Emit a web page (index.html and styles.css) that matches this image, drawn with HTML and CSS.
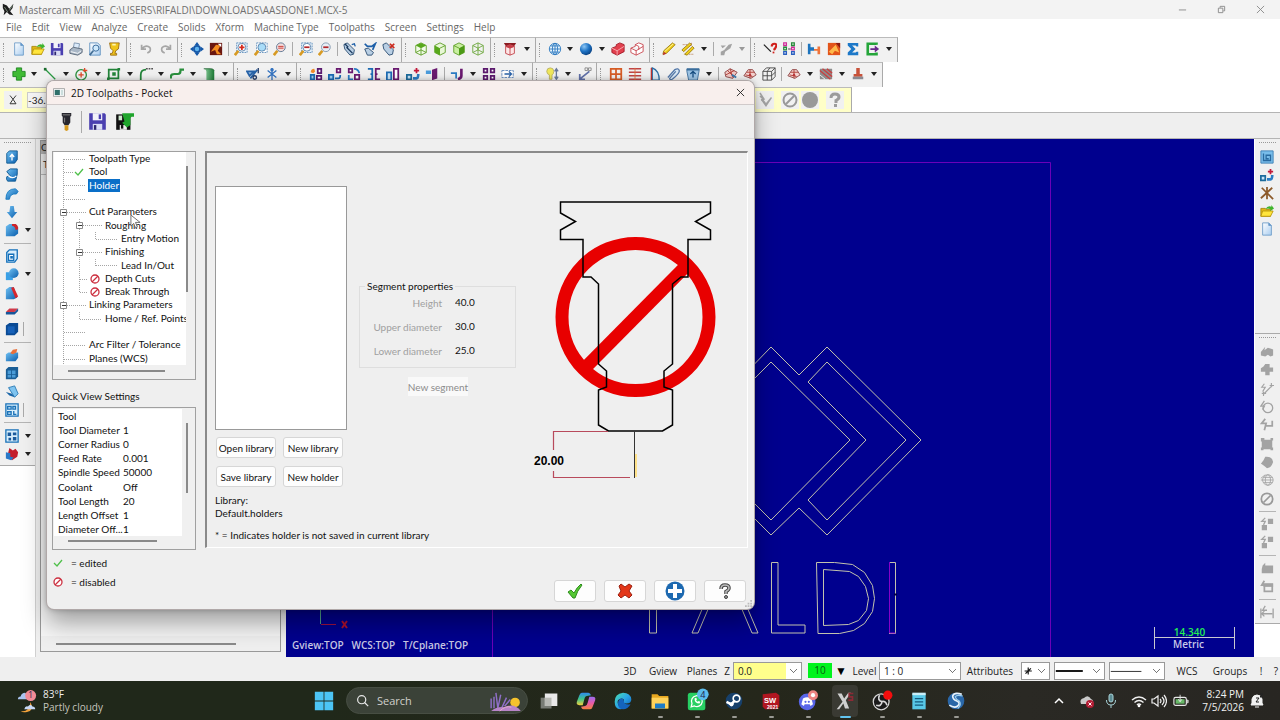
FILE: index.html
```html
<!DOCTYPE html>
<html lang="en">
<head>
<meta charset="utf-8">
<title>Mastercam Mill X5</title>
<link rel="stylesheet" href="styles.css">
</head>
<body>
<svg class="sprite" aria-hidden="true">
<defs>
<linearGradient id="gBlue" x1="0" y1="0" x2="1" y2="1"><stop offset="0" stop-color="#6fc0f2"/><stop offset="1" stop-color="#0b5fae"/></linearGradient>
<linearGradient id="gGreen" x1="0" y1="0" x2="1" y2="0"><stop offset="0" stop-color="#8fd0a0"/><stop offset="1" stop-color="#1c7a35"/></linearGradient>
<linearGradient id="gPage" x1="0" y1="0" x2="1" y2="1"><stop offset="0" stop-color="#fff"/><stop offset="1" stop-color="#a9cdf0"/></linearGradient>
<radialGradient id="gBall" cx=".35" cy=".3" r=".8"><stop offset="0" stop-color="#8cc6f5"/><stop offset=".5" stop-color="#1d72c4"/><stop offset="1" stop-color="#073a78"/></radialGradient>
<linearGradient id="gEdge" x1="0" y1="0" x2="1" y2="1"><stop offset="0" stop-color="#4be0b0"/><stop offset=".5" stop-color="#2aa5e6"/><stop offset="1" stop-color="#0a56b5"/></linearGradient>
<linearGradient id="gCopA" x1="0" y1="0" x2="0" y2="1"><stop offset="0" stop-color="#2f8bf0"/><stop offset=".5" stop-color="#3cc48c"/><stop offset="1" stop-color="#f2d13c"/></linearGradient>
<linearGradient id="gCopB" x1="0" y1="0" x2="0" y2="1"><stop offset="0" stop-color="#9a6cf0"/><stop offset=".5" stop-color="#e85aa8"/><stop offset="1" stop-color="#f4823c"/></linearGradient>
</defs>
<symbol id="page" viewBox="0 0 16 16"><path d="M3 1h7l3 3v11H3z" fill="url(#gPage)" stroke="#6d9cc8"/><path d="M10 1v3h3" fill="#5d95cf" stroke="#6d9cc8"/></symbol>
<symbol id="open" viewBox="0 0 16 16"><path d="M1 5h5l1 1h5v8H1z" fill="#e0b813" stroke="#a8860a"/><path d="M3 8h12l-3 6H1z" fill="#ffe53b" stroke="#b8960f"/><path d="M6 6q3-5 7-3V1l3 4-4 3V6q-3-2-6 0z" fill="#3fb52e"/></symbol>
<symbol id="save" viewBox="0 0 16 16"><path d="M1 1h13l1 1v13H1z" fill="#4a3fb0"/><path d="M4 1h8v6H4z" fill="#f2f2fa"/><path d="M9 2h2v4H9z" fill="#4a3fb0"/><path d="M4 10h8v5H4z" fill="#d9dcf5"/><path d="M5 11h2v4H5z" fill="#2d2670"/></symbol>
<symbol id="savew" viewBox="0 0 16 16"><path d="M1 2h12v13H1z" fill="#111"/><path d="M3 3h3v4H3z" fill="#cfe8cf"/><path d="M4 11h6v4H4z" fill="#eee"/><path d="M5 11h2v3H5z" fill="#111"/><path d="M6 1h10v3h-2l-1 1v6l-3 2-4-4 2-1z" fill="#1fa52c"/></symbol>
<symbol id="print" viewBox="0 0 16 16"><path d="M6 1l6 1-1 6-6-1z" fill="#dcebfa" stroke="#7790ac"/><path d="M1 9l4-3 10 2v4l-5 3-9-2z" fill="#a9b7c6" stroke="#586676"/><path d="M2 11l8 2 4-3" stroke="#fff" fill="none"/></symbol>
<symbol id="preview" viewBox="0 0 16 16"><path d="M2 1h9l3 3v11H2z" fill="url(#gPage)" stroke="#5e90bf"/><circle cx="9" cy="7" r="3.5" fill="#cfe9fb" stroke="#2b5f93"/><path d="M6 10l-4 5" stroke="#446f97" stroke-width="2"/></symbol>
<symbol id="cup" viewBox="0 0 16 16"><path d="M3 1h11l-1 7-3 2-1 3h2v2H4v-2h2l1-3-3-3z" fill="#f0c419" stroke="#9a6c10"/><path d="M6 3h4" stroke="#fff5b0" stroke-width="2"/></symbol>
<symbol id="undo" viewBox="0 0 16 16"><path d="M3 3v5h5M3.500 7.500q5-5 9-1 2 4-3 6" fill="none" stroke="#a6a6a6" stroke-width="2"/></symbol>
<symbol id="redo" viewBox="0 0 16 16"><path d="M13 3v5H8M12.500 7.500q-5-5-9-1-2 4 3 6" fill="none" stroke="#a6a6a6" stroke-width="2"/></symbol>
<symbol id="fit" viewBox="0 0 16 16"><path d="M8 0l3 4H5zM8 16l3-4H5zM0 8l4-3v6zM16 8l-4-3v6z" fill="#1558a8"/><circle cx="8" cy="8" r="3.500" fill="#5eb2ee" stroke="#1558a8" stroke-width="2"/></symbol>
<symbol id="repaint" viewBox="0 0 16 16"><path d="M1 1h14v14H1z" fill="#6b1710"/><path d="M2 11l6-8 5 1-3 6 4 4H9L7 9z" fill="#f58c1f"/><path d="M10 2h4v4z" fill="#fff"/></symbol>
<symbol id="zin" viewBox="0 0 16 16"><path d="M3 1h12v11H3z" fill="#e6f1fb" stroke="#5d8dbb" stroke-dasharray="2 1"/><circle cx="9" cy="6" r="4.500" fill="#fff" stroke="#567fa8"/><path d="M9 3v6M6 6h6" stroke="#d52b1e" stroke-width="2"/><path d="M5 10l-4 5" stroke="#d79a22" stroke-width="3"/></symbol>
<symbol id="ztar" viewBox="0 0 16 16"><path d="M3 1h12v11H3z" fill="#fff" stroke="#5d8dbb" stroke-dasharray="2 1"/><circle cx="9" cy="6" r="4.500" fill="#a8dcf8" stroke="#567fa8"/><path d="M5 10l-4 5" stroke="#d79a22" stroke-width="3"/></symbol>
<symbol id="zout" viewBox="0 0 16 16"><circle cx="9" cy="6" r="5" fill="#f3dcdc" stroke="#56718f"/><path d="M6 5h6M6 7h6" stroke="#c72a22"/><path d="M5 10l-4 5" stroke="#d79a22" stroke-width="3"/></symbol>
<symbol id="zbox" viewBox="0 0 16 16"><path d="M3 1h12v11H3z" fill="#e6f1fb" stroke="#5d8dbb" stroke-dasharray="2 1"/><circle cx="9" cy="6" r="4.500" fill="#fff" stroke="#567fa8"/><path d="M6 6h6" stroke="#b3252a" stroke-width="2"/><path d="M5 10l-4 5" stroke="#d79a22" stroke-width="3"/></symbol>
<symbol id="zmin" viewBox="0 0 16 16"><circle cx="9" cy="6" r="5" fill="#e8eef5" stroke="#7d95ad"/><path d="M6 6h6" stroke="#b3252a" stroke-width="2"/><path d="M5 10l-4 5" stroke="#d79a22" stroke-width="3"/></symbol>
<symbol id="dyn" viewBox="0 0 16 16"><path d="M1 3l4-2 8 8-1 5-4 1-6-7z" fill="#b9cfe4" stroke="#27496e"/><path d="M4 6l7 7M2 2l4 4" stroke="#1a3a5f" stroke-width="1.500"/><path d="M10 3l3-1 1 3" fill="none" stroke="#1d5fa8" stroke-width="1.500"/></symbol>
<symbol id="dyn2" viewBox="0 0 16 16"><path d="M2 8l4-1 6 5-2 3-5 0z" fill="#b9cfe4" stroke="#27496e"/><path d="M2 2l3 3h5l4-3-3 7" fill="none" stroke="#1d5fa8" stroke-width="2"/></symbol>
<symbol id="dynx" viewBox="0 0 16 16"><path d="M1 3l4-2 8 8-1 5-4 1-6-7z" fill="#b9cfe4" stroke="#27496e"/><path d="M9 2l5 5M14 2L9 7" stroke="#cc2a1e" stroke-width="2"/></symbol>
<symbol id="gcube1" viewBox="0 0 16 16"><path d="M2 4l6-3 6 3v8l-6 3-6-3z" fill="#f2fbe8" stroke="#5a9c22"/><path d="M2 4l6-3 6 3-6 3z" fill="#58a81c"/><path d="M8 7v8M2 12l6-3 6 3" stroke="#5a9c22" fill="none"/></symbol>
<symbol id="gcube2" viewBox="0 0 16 16"><path d="M2 4l6-3 6 3v8l-6 3-6-3z" fill="#e8f7d6" stroke="#5a9c22"/><path d="M2 4l6 3v8l-6-3z" fill="#58a81c"/><path d="M8 7l6-3" stroke="#5a9c22"/></symbol>
<symbol id="gcube3" viewBox="0 0 16 16"><path d="M2 4l6-3 6 3v8l-6 3-6-3z" fill="#c9efa0" stroke="#5a9c22"/><path d="M8 7l6-3v8l-6 3z" fill="#4c9a16"/><path d="M2 4l6 3" stroke="#5a9c22"/></symbol>
<symbol id="gcube4" viewBox="0 0 16 16"><path d="M2 4l6-3 6 3v8l-6 3-6-3zM2 4l6 3 6-3M8 7v8M8 1v8M2 12l6-3 6 3" fill="none" stroke="#6aa63a"/></symbol>
<symbol id="rcube" viewBox="0 0 16 16"><path d="M1 1h14l-3 5H4z" fill="#8b1c22"/><path d="M3 5l5-2 5 2v8l-5 2-5-2z" fill="#fde6e6" stroke="#c04048"/><path d="M3 5l5-2 5 2-5 2z" fill="#c93c48"/><path d="M3 5l5 2 5-2M8 7v8" stroke="#c04048" fill="none"/></symbol>
<symbol id="globe" viewBox="0 0 16 16"><g fill="none" stroke="#2b78bf"><circle cx="8" cy="8" r="6.500" fill="#e6f4fd"/><ellipse cx="8" cy="8" rx="3" ry="6.500"/><path d="M1.500 8h13M3 4.500h10M3 11.500h10M8 1.500v13"/></g></symbol>
<symbol id="ball" viewBox="0 0 16 16"><circle cx="8" cy="8" r="7" fill="url(#gBall)"/></symbol>
<symbol id="rsolid" viewBox="0 0 16 16"><path d="M1 7l5-2V3l4-2 5 2v8l-8 4-6-3z" fill="#e2404e" stroke="#a01825"/><path d="M1 7l6 3 8-5M7 10v5" fill="none" stroke="#f8b0b5"/></symbol>
<symbol id="rwire" viewBox="0 0 16 16"><path d="M1 7l5-2V3l4-2 5 2v8l-8 4-6-3zM1 7l6 3 8-5M7 10v5M6 3l4 2v4" fill="#fff" stroke="#c8434d"/></symbol>
<symbol id="pencil" viewBox="0 0 16 16"><path d="M1 14l1-4L12 1l3 2L5 13z" fill="#f0cf1c" stroke="#9c7c10"/><path d="M3 11l10-9" stroke="#fff7a8"/><path d="M1 15l1-4 3 2z" fill="#b33"/></symbol>
<symbol id="pencils" viewBox="0 0 16 16"><path d="M1 9l9-8 2 2-9 8zM4 14l9-9 2 2-8 8z" fill="#f0cf1c" stroke="#9c7c10"/><path d="M2 3h5M9 14h5M12 1v3" stroke="#a63" stroke-dasharray="1 1"/></symbol>
<symbol id="gpen" viewBox="0 0 16 16"><path d="M2 15v-4l4-2 5-6 4-1-2 5-6 4-1 4zM2 4h6l-4 3z" fill="#a3a3a3"/></symbol>
<symbol id="ask" viewBox="0 0 16 16"><path d="M1 3l8 8" stroke="#222" stroke-width="1.500"/><path d="M10 5q0-3 3-3t2 3-3 4" fill="none" stroke="#d0201c" stroke-width="2.500"/><path d="M11 11h2v2h-2z" fill="#d0201c"/></symbol>
<symbol id="nodes" viewBox="0 0 16 16"><g fill="#fff" stroke-width="1.500"><path d="M2 1h3v3H2zM11 6h3v3h-3z" stroke="#d02b9a"/><path d="M2 6h3v3H2zM11 1h3v3h-3z" stroke="#258a3a"/><path d="M2 11h3v3H2zM11 11h3v3h-3z" stroke="#2a5fc0"/></g><path d="M7 8h3" stroke="#333"/></symbol>
<symbol id="hblue" viewBox="0 0 16 16"><path d="M1 2h3v4h4v4H4v4H1z" fill="#1d74bd"/><path d="M15 5h-3v3H8v2h4v4h3z" fill="#f0743a"/></symbol>
<symbol id="orange" viewBox="0 0 16 16"><path d="M1 1h14v14H1z" fill="#e3541a"/><path d="M2 11l8-8 4 9-5-2-3 4z" fill="#ffb84a"/><path d="M10 1h5v6z" fill="#8c1a10"/></symbol>
<symbol id="sigma" viewBox="0 0 16 16"><path d="M2 1h12v4h-2l-1-1H7l4 4-4 4h4l1-1h2v4H2v-3l4-4-4-4z" fill="#1d78c8"/></symbol>
<symbol id="exit" viewBox="0 0 16 16"><path d="M12 3V2H2v12h10v-2" fill="none" stroke="#25a53a" stroke-width="3"/><path d="M5 7h5V4l5 4-5 4V9H5z" fill="#6a2a8c"/></symbol>
<symbol id="plus" viewBox="0 0 16 16"><path d="M5 1h6v4h4v6h-4v4H5v-4H1V5h4z" fill="#3fbb34" stroke="#1d8420"/></symbol>
<symbol id="line" viewBox="0 0 16 16"><path d="M2 2l12 12" stroke="#2a9a43" stroke-width="1.500"/><path d="M1 1h3v3H1z" fill="#1b6c2e"/></symbol>
<symbol id="circ" viewBox="0 0 16 16"><circle cx="7" cy="9" r="6" fill="none" stroke="#2a8f3d" stroke-width="1.500"/><path d="M7 6v6M4 9h6M11 1v5M9 4h5" stroke="#dd4a2a" stroke-width="1.500"/></symbol>
<symbol id="rect" viewBox="0 0 16 16"><path d="M2 3h11v10H2z" fill="none" stroke="#23843a" stroke-width="2"/><path d="M6 6h4v4H6zM12 1h3v3h-3zM0 12h3v3H0z" fill="#23843a"/></symbol>
<symbol id="fillet" viewBox="0 0 16 16"><path d="M2 15V9q0-6 6-6" fill="none" stroke="#23843a" stroke-width="2"/><path d="M8 2h8" stroke="#555" stroke-dasharray="2 1" stroke-width="1.500"/></symbol>
<symbol id="spline" viewBox="0 0 16 16"><path d="M1 13v-2q0-3 4-3h4q3 0 3-4V3h4" fill="none" stroke="#2a8f3d" stroke-width="2.500"/></symbol>
<symbol id="cyl" viewBox="0 0 16 16"><path d="M2 2h8q4 0 4 3v10H5V5q0-2-3-3z" fill="url(#gGreen)"/><path d="M2 2h8q3 0 4 2" stroke="#2a6a3a" fill="none"/></symbol>
<symbol id="trim" viewBox="0 0 16 16"><path d="M1 5h8l-5 5zM5 13l8-10" stroke="#2763a9" stroke-width="2" fill="#8fb8e0"/><circle cx="10" cy="12" r="2" fill="none" stroke="#223a66" stroke-width="1.500"/><path d="M14 1v6" stroke="#223a66" stroke-width="1.500"/></symbol>
<symbol id="star" viewBox="0 0 16 16"><path d="M8 1v14M3 4l10 8M13 4L3 12" stroke="#3272c0" stroke-width="1.500"/><circle cx="8" cy="3" r="2" fill="#3272c0"/></symbol>
<symbol id="xa" viewBox="0 0 16 16"><path d="M10 2h4v5h-4zM9 10h5v4H9z" fill="#fff" stroke="#5a1a70" stroke-width="2"/><path d="M2 9h4v5H2z" fill="#9fd0f2" stroke="#1d6cb4" stroke-width="2"/><path d="M2 6q0-4 4-4l1 3-2 2z" fill="#f08c28"/></symbol>
<symbol id="xb" viewBox="0 0 16 16"><path d="M10 2h4v4h-4z" fill="#fff" stroke="#6a1a70" stroke-width="2"/><path d="M1 9h5v5H1z" fill="#9fd0f2" stroke="#1d6cb4" stroke-width="2"/><path d="M8 13h4q2 0 2-4" fill="none" stroke="#1d6cb4" stroke-width="2"/></symbol>
<symbol id="xc" viewBox="0 0 16 16"><path d="M2 2h4v4H2zM9 9h5v5H9z" fill="#fff" stroke="#6a1a70" stroke-width="2"/><path d="M8 2q5 0 6 5M2 9v5h5" fill="none" stroke="#2a7cc4" stroke-width="2"/></symbol>
<symbol id="xd" viewBox="0 0 16 16"><path d="M1 2h5v12H1M4 8h3" fill="none" stroke="#1d6cb4" stroke-width="2"/><path d="M15 2h-5v12h5M12 8h-3" fill="none" stroke="#6a1a70" stroke-width="2"/></symbol>
<symbol id="xe" viewBox="0 0 16 16"><path d="M1 6h5v9H1z" fill="#c9e4f8" stroke="#1d6cb4" stroke-width="2"/><path d="M9 2h5v12H9z" fill="#fff" stroke="#6a1a70" stroke-width="2"/></symbol>
<symbol id="xf" viewBox="0 0 16 16"><path d="M1 9h5v5H1z" fill="#c9e4f8" stroke="#1d6c9c" stroke-width="2"/><path d="M8 13h4q2 0 2-5" fill="none" stroke="#2a7cc4" stroke-width="3"/><path d="M11 1h2v2h2v2h-2v2h-2V5H9V3h2z" fill="#c2183a"/></symbol>
<symbol id="xg" viewBox="0 0 16 16"><path d="M8 3l6-2v12l-6 2z" fill="#6a1a70"/><path d="M1 4h6v4H1z" fill="#4a9cdc"/></symbol>
<symbol id="xh" viewBox="0 0 16 16"><path d="M1 7h6v6" stroke="#2a7cc4" fill="none" stroke-width="2"/><path d="M13 2v8q0 3-4 4" fill="none" stroke="#6a1a70" stroke-width="3"/></symbol>
<symbol id="four" viewBox="0 0 16 16"><path d="M2 2h4v4H2zM10 2h4v4h-4zM2 10h4v4H2zM10 10h4v4h-4z" fill="#fff" stroke="#5c1a6e" stroke-width="2"/></symbol>
<symbol id="stretch" viewBox="0 0 16 16"><path d="M1 4h13v8H1z" fill="#fff" stroke="#5a83b8" stroke-dasharray="3 1"/><path d="M4 8h8M9 5l3 3-3 3" fill="none" stroke="#2a62a8" stroke-width="1.500"/></symbol>
<symbol id="bulb" viewBox="0 0 16 16"><path d="M2 5q0-4 4-4t4 4q0 3-2 4v5H5V9Q2 8 2 5z" fill="#f0e85a" stroke="#b9b060"/><path d="M13 3v10M11 5l2-3 2 3M11 11l2 3 2-3" stroke="#6a7a9a" fill="none" stroke-width="1.500"/></symbol>
<symbol id="move" viewBox="0 0 16 16"><path d="M8 1h3v3H8zM12 1h3v3h-3z" fill="none" stroke="#888"/><path d="M13 5L3 13M2 8v6h6" stroke="#6070a8" stroke-width="2" fill="none"/></symbol>
<symbol id="grid" viewBox="0 0 16 16"><path d="M2 2h12v12H2zM2 8h12M8 2v12" fill="none" stroke="#d65c26" stroke-width="2"/></symbol>
<symbol id="lines" viewBox="0 0 16 16"><path d="M1 2h14M1 6h14M1 10h14M1 14h14" stroke="#c04545" stroke-width="1.500"/><path d="M8 1v14" stroke="#e0703a"/></symbol>
<symbol id="arc" viewBox="0 0 16 16"><path d="M6 1v14h8Q14 4 6 1z" fill="#dceaf5" stroke="#2d6da4" stroke-width="1.500"/><path d="M5 1v14" stroke="#b33" stroke-width="1.500"/></symbol>
<symbol id="clip" viewBox="0 0 16 16"><path d="M1 12l8-9q4-2 5 1t-8 10q-3 1-3-1l7-8" fill="#d9e8f5" stroke="#5277a8" stroke-width="1.500"/></symbol>
<symbol id="box" viewBox="0 0 16 16"><path d="M1 2h14v2l-2 11H3L1 5z" fill="#9dc4e4" stroke="#3b6e9c"/><path d="M8 12V6M5 8l3-3 3 3" stroke="#174d80" stroke-width="1.500" fill="none"/><path d="M1 2h14v2H1z" fill="#3b6e9c"/></symbol>
<symbol id="mesh" viewBox="0 0 16 16"><path d="M1 6l6-4 8 4-5 7-8-2z" fill="#f0c8c4" stroke="#8c4040"/><path d="M4 4l7 7M2 9l10-5M7 2l3 10" stroke="#b03a34" fill="none"/><path d="M9 9l5 3" stroke="#3a7ab0" stroke-width="2"/></symbol>
<symbol id="mesh2" viewBox="0 0 16 16"><path d="M1 10l5-7h5l4 6-6 4z" fill="#f3d2ce" stroke="#8c4040"/><path d="M8 3v10M4 6h9M3 9l8 2" stroke="#b03a34" fill="none"/><path d="M8 7l2 3H6z" fill="#b3282c"/></symbol>
<symbol id="wcube" viewBox="0 0 16 16"><path d="M1 5l4-4h10v10l-4 4H1zM1 5h10v10M11 5l4-4M6 5v10M1 10h10l4-4M6 5l3-4" fill="none" stroke="#444"/></symbol>
<symbol id="stripe" viewBox="0 0 16 16"><path d="M1 2h14v12H1z" fill="#8d8d8d"/><path d="M1 4l12 10M4 2l11 9M9 2l6 5" stroke="#c84040" stroke-width="1.500"/><path d="M1 9l6 5" stroke="#fff"/></symbol>
<symbol id="stamp" viewBox="0 0 16 16"><path d="M6 1h4v7h3v3H3V8h3z" fill="#c8523a"/><path d="M2 11h12v3H2z" fill="#8a8a92"/></symbol>
<symbol id="chk" viewBox="0 0 16 16"><path d="M3 1l4 6-3 1M3 4l3 3" fill="none" stroke="#a5a5a5" stroke-width="1.500"/><path d="M4 8l2-1 3 4 5-6 1 1-6 9z" fill="#a5a5a5"/></symbol>
<symbol id="nog" viewBox="0 0 16 16"><circle cx="8" cy="8" r="6.500" fill="none" stroke="#999" stroke-width="2"/><path d="M4 12l8-8" stroke="#999" stroke-width="2"/></symbol>
<symbol id="dot" viewBox="0 0 16 16"><circle cx="8" cy="8" r="8" fill="#999"/></symbol>
<symbol id="help" viewBox="0 0 16 16"><path d="M4 6q0-4 4-4t4 3q0 2-3 3.500V11" fill="none" stroke="#9b9b9b" stroke-width="3"/><path d="M7 12h3v3H7z" fill="#9b9b9b"/></symbol>
<symbol id="bext" viewBox="0 0 16 16"><path d="M2 4l3-3h9v10l-3 4H2z" fill="url(#gBlue)" stroke="#0c568f"/><path d="M8 12V6M5.500 8L8 5l2.500 3" stroke="#fff" stroke-width="1.500" fill="none"/></symbol>
<symbol id="brev" viewBox="0 0 16 16"><path d="M2 4l4-3h8v6l-2 8H3q-2-2-1-5l4-1z" fill="url(#gBlue)" stroke="#0c568f"/><path d="M4 9q5 4 9 0" stroke="#fff" stroke-width="1.500" fill="none"/></symbol>
<symbol id="bswp" viewBox="0 0 16 16"><path d="M1 14q0-12 11-12l3 3-2 3q-7-1-8 6z" fill="url(#gBlue)" stroke="#1679c0"/></symbol>
<symbol id="bloft" viewBox="0 0 16 16"><path d="M6 1h4l1 7h3l-6 7-6-7h3z" fill="url(#gBlue)"/></symbol>
<symbol id="bfil" viewBox="0 0 16 16"><path d="M1 4l4-3h7l3 4v7l-4 3H1z" fill="url(#gBlue)"/><path d="M8 1h4q3 1 3 6l-3 1q0-4-4-5z" fill="#cf2228"/></symbol>
<symbol id="bshell" viewBox="0 0 16 16"><path d="M2 4l3-3h9v10l-3 4H2z" fill="#d6edfc" stroke="#1470ba" stroke-width="1.500"/><path d="M4 6h6v7H4z" fill="#fff" stroke="#1470ba" stroke-width="1.500"/><path d="M6 8h3v3H6z" fill="#1470ba"/></symbol>
<symbol id="bbool" viewBox="0 0 16 16"><path d="M1 6h8v9H1z" fill="#3aa0e6"/><circle cx="10" cy="7" r="5.500" fill="url(#gBlue)"/></symbol>
<symbol id="bdraft" viewBox="0 0 16 16"><path d="M1 4l4-3h5l4 12-4 2H1z" fill="url(#gBlue)"/><path d="M7 2l3-1 5 11-3 2z" fill="#d8262c"/></symbol>
<symbol id="bthick" viewBox="0 0 16 16"><path d="M1 9l4-4h10l-4 4z" fill="#d03a4a"/><path d="M1 9h10l4-4v3l-4 4H1z" fill="#17569a"/></symbol>
<symbol id="bcube" viewBox="0 0 16 16"><path d="M1 4l4-3h10v10l-4 4H1z" fill="#0a4a94"/><path d="M3 5h8v8H3z" fill="#1660b8"/></symbol>
<symbol id="bfeat" viewBox="0 0 16 16"><path d="M1 7l3-2h11v6l-3 4H1z" fill="url(#gBlue)"/><path d="M6 6l3-4 5-1-1 4-4 2z" fill="#e9703a"/></symbol>
<symbol id="b4" viewBox="0 0 16 16"><path d="M1 4l3-3h11v11l-3 3H1z" fill="#1a5e96"/><path d="M3 5h4v4H3zM8 5h4v4H8zM3 10h4v3H3zM8 10h4v3H8z" fill="#4a9cd8"/></symbol>
<symbol id="bsheet" viewBox="0 0 16 16"><path d="M4 3l7-2 4 9-4 4z" fill="#7fc4f0" stroke="#2577b4"/><path d="M1 8l7 2 3 4-6-2z" fill="#1a66a8"/></symbol>
<symbol id="blay" viewBox="0 0 16 16"><path d="M1 1h14v14H1z" fill="#d9effc" stroke="#1a72b8" stroke-width="1.500"/><path d="M3 4h4v3H3zM9 4h3v3H9zM3 10h4v3H3zM10 9v4h3" stroke="#1a72b8" fill="none" stroke-width="1.500"/></symbol>
<symbol id="bmap" viewBox="0 0 16 16"><path d="M1 1h14v14H1z" fill="#d9effc" stroke="#1a72b8" stroke-width="1.500"/><path d="M3 4h4v4H3zM9 4h4v3H9zM4 10h3v3H4zM9 9h4v4H9z" fill="#1a5a9c"/></symbol>
<symbol id="bred" viewBox="0 0 16 16"><path d="M5 1l4 3 3-2 3 4-1 5-6 4-5-6z" fill="#c41d2c"/><path d="M1 6l5 1v4l4 1-3 3-6-2z" fill="#2a79c8"/></symbol>
<symbol id="rscr" viewBox="0 0 16 16"><path d="M1 1h14v14H1z" fill="#78bdea" stroke="#3b7eb2"/><path d="M4 4v8h8V6H7v4h3" fill="none" stroke="#286aa0" stroke-width="1.500"/></symbol>
<symbol id="rax" viewBox="0 0 16 16"><path d="M8 1v14M1 14L14 2M2 2l13 13" stroke="#8c5a2a" stroke-width="2"/></symbol>
<symbol id="q1" viewBox="0 0 16 16"><path d="M1 8l5-6-1 4 4-3 6 2v7l-3 1-3-2-3 2-5-1z" fill="#a3a3a3"/></symbol>
<symbol id="q2" viewBox="0 0 16 16"><path d="M6 1h5v4h4v5h-4v4H6v-4H1V6l3-2z" fill="#a3a3a3"/></symbol>
<symbol id="q3" viewBox="0 0 16 16"><path d="M4 14L14 4M5 2L2 6h4l-3 5M13 1v5M11 4h5M2 13h5M4 11v5" fill="none" stroke="#a3a3a3" stroke-width="1.300"/></symbol>
<symbol id="q4" viewBox="0 0 16 16"><circle cx="9" cy="9" r="5.500" fill="none" stroke="#a3a3a3" stroke-width="1.500"/><path d="M5 1L1 7h4l-2 4" fill="none" stroke="#a3a3a3" stroke-width="1.500"/></symbol>
<symbol id="q5" viewBox="0 0 16 16"><path d="M6 1L2 6h5l-2 8M6 9h8V3" fill="none" stroke="#a3a3a3" stroke-width="2"/></symbol>
<symbol id="q6" viewBox="0 0 16 16"><path d="M2 3h12v11H2zM1 1h4v4H1zM12 1h3v3h-3zM1 12h3v3H1zM12 12h3v3h-3z" fill="#a3a3a3"/></symbol>
<symbol id="q7" viewBox="0 0 16 16"><path d="M6 2q8-1 9 6-2 7-7 7-5-4-7-5l3-4z" fill="#a3a3a3"/></symbol>
<symbol id="q8" viewBox="0 0 16 16"><g fill="none" stroke="#a3a3a3"><circle cx="9" cy="8" r="6"/><ellipse cx="9" cy="8" rx="3" ry="6"/><path d="M1 8h14M4 5h10M4 11h10M1 6l5-4"/></g></symbol>
<symbol id="q9" viewBox="0 0 16 16"><path d="M9 2h6v6H9zM2 9h6v6H2z" fill="#a3a3a3"/><path d="M6 1L2 5h4L4 9" fill="none" stroke="#a3a3a3" stroke-width="1.500"/></symbol>
<symbol id="q10" viewBox="0 0 16 16"><path d="M3 5l3-3v3h9v9H2V9z" fill="#a3a3a3"/></symbol>
<symbol id="q11" viewBox="0 0 16 16"><path d="M5 2L2 7h4M5 6h9v8H5z" fill="none" stroke="#a3a3a3" stroke-width="2"/><path d="M4 5h11v4H4z" fill="#a3a3a3"/></symbol>
<symbol id="q12" viewBox="0 0 16 16"><path d="M1 4v11M15 4v11M2 10h12M5 7l-3 3 3 3M6 1L3 6h5" fill="none" stroke="#a3a3a3" stroke-width="1.500"/></symbol>
<symbol id="no" viewBox="0 0 12 12"><circle cx="6" cy="6" r="4" fill="#fff" stroke="#cc2f3f" stroke-width="1.300"/><path d="M3 9l6-6" stroke="#cc2f3f" stroke-width="1.300"/></symbol>
<symbol id="tick" viewBox="0 0 12 12"><path d="M2 6l3 3 5-6" fill="none" stroke="#4fc04a" stroke-width="1.300"/></symbol>
</svg>

<div class="app">
  <header class="titlebar">
    <svg class="logo" viewBox="0 0 16 16"><path d="M1 1l5 2 3 4 5-6-1 5-3 4 4 5-5-1-3-3-4 4 1-5L1 6z" fill="#1d1d1d"/><path d="M3 5l4 6M9 9l4-6" stroke="#8ba08b"/></svg>
    <h1 class="title">Mastercam Mill X5&nbsp; C:\USERS\RIFALDI\DOWNLOADS\AASDONE1.MCX-5</h1>
    <div class="winbtns">
      <button aria-label="Minimize"><svg viewBox="0 0 10 10"><path d="M1 5.500h8" stroke="#888"/></svg></button>
      <button aria-label="Restore"><svg viewBox="0 0 10 10"><path d="M1.500 3.500h5v5h-5zM3.500 3V1.500h5v5H7" fill="none" stroke="#888"/></svg></button>
      <button aria-label="Close"><svg viewBox="0 0 10 10"><path d="M1 1l8 8M9 1L1 9" stroke="#888"/></svg></button>
    </div>
  </header>
  <nav class="menubar">
    <button>File</button><button>Edit</button><button>View</button><button>Analyze</button><button>Create</button><button>Solids</button><button>Xform</button><button>Machine Type</button><button>Toolpaths</button><button>Screen</button><button>Settings</button><button>Help</button>
  </nav>

  <div class="toolrow">
    <div class="grp w127">
      <button aria-label="New"><svg><use href="#page"/></svg></button><button aria-label="Open"><svg><use href="#open"/></svg></button><button aria-label="Save"><svg><use href="#save"/></svg></button><button aria-label="Print"><svg><use href="#print"/></svg></button><button aria-label="Preview"><svg><use href="#preview"/></svg></button><button aria-label="Verify"><svg><use href="#cup"/></svg></button>
    </div>
    <div class="grp w51">
      <button aria-label="Undo"><svg><use href="#undo"/></svg></button><button aria-label="Redo"><svg><use href="#redo"/></svg></button>
    </div>
    <div class="grp w224">
      <button aria-label="Fit"><svg><use href="#fit"/></svg></button><button aria-label="Repaint"><svg><use href="#repaint"/></svg></button><i class="sep"></i><button aria-label="Zoom window"><svg><use href="#zin"/></svg></button><button aria-label="Zoom target"><svg><use href="#ztar"/></svg></button><button aria-label="Un-zoom"><svg><use href="#zout"/></svg></button><i class="sep"></i><button aria-label="Zoom previous"><svg><use href="#zbox"/></svg></button><button aria-label="Zoom out"><svg><use href="#zmin"/></svg></button><i class="sep"></i><button aria-label="Dynamic rotate"><svg><use href="#dyn"/></svg></button><button aria-label="Rotate view"><svg><use href="#dyn2"/></svg></button><button aria-label="Clear view"><svg><use href="#dynx"/></svg></button>
    </div>
    <div class="grp w89">
      <button aria-label="Top view"><svg><use href="#gcube1"/></svg></button><button aria-label="Front view"><svg><use href="#gcube2"/></svg></button><button aria-label="Side view"><svg><use href="#gcube3"/></svg></button><button aria-label="Isometric"><svg><use href="#gcube4"/></svg></button>
    </div>
    <div class="grp w45">
      <button aria-label="Planes"><svg><use href="#rcube"/></svg></button><button class="dd" aria-label="More planes"></button>
    </div>
    <div class="grp w114">
      <button aria-label="Wireframe"><svg><use href="#globe"/></svg></button><button class="dd" aria-label="More wireframe"></button><button aria-label="Shaded"><svg><use href="#ball"/></svg></button><button class="dd" aria-label="More shading"></button><button aria-label="Solid"><svg><use href="#rsolid"/></svg></button><button aria-label="Translucent"><svg><use href="#rwire"/></svg></button>
    </div>
    <div class="grp w101">
      <button aria-label="Delete"><svg><use href="#pencil"/></svg></button><button aria-label="Delete duplicates"><svg><use href="#pencils"/></svg></button><button class="dd" aria-label="More delete"></button><i class="sep"></i><button aria-label="Undelete"><svg><use href="#gpen"/></svg></button><button class="dd grey" aria-label="More undelete"></button>
    </div>
    <div class="grp w147">
      <button aria-label="Analyze"><svg><use href="#ask"/></svg></button><button aria-label="Attributes"><svg><use href="#nodes"/></svg></button><i class="sep"></i><button aria-label="Hide"><svg><use href="#hblue"/></svg></button><button aria-label="Render"><svg><use href="#orange"/></svg></button><button aria-label="Sum"><svg><use href="#sigma"/></svg></button><button aria-label="Run"><svg><use href="#exit"/></svg></button><button class="dd" aria-label="More run"></button>
    </div>
  </div>

  <div class="toolrow">
    <div class="grp w234">
      <button aria-label="Point"><svg><use href="#plus"/></svg></button><button class="dd" aria-label="More points"></button><button aria-label="Line"><svg><use href="#line"/></svg></button><button class="dd" aria-label="More lines"></button><button aria-label="Arc"><svg><use href="#circ"/></svg></button><button class="dd" aria-label="More arcs"></button><button aria-label="Rectangle"><svg><use href="#rect"/></svg></button><button class="dd" aria-label="More shapes"></button><button aria-label="Fillet"><svg><use href="#fillet"/></svg></button><button class="dd" aria-label="More fillets"></button><button aria-label="Spline"><svg><use href="#spline"/></svg></button><button class="dd" aria-label="More splines"></button><button aria-label="Surface"><svg><use href="#cyl"/></svg></button><button class="dd" aria-label="More surfaces"></button>
    </div>
    <div class="grp w63">
      <button aria-label="Trim"><svg><use href="#trim"/></svg></button><button aria-label="Break"><svg><use href="#star"/></svg></button><button class="dd" aria-label="More break"></button>
    </div>
    <div class="grp w236">
      <button aria-label="Translate"><svg><use href="#xa"/></svg></button><button aria-label="Translate 3D"><svg><use href="#xb"/></svg></button><button aria-label="Mirror"><svg><use href="#xc"/></svg></button><button aria-label="Rotate"><svg><use href="#xd"/></svg></button><button aria-label="Scale"><svg><use href="#xe"/></svg></button><button aria-label="Dynamic"><svg><use href="#xf"/></svg></button><button aria-label="Project"><svg><use href="#xg"/></svg></button><i class="sep"></i><button aria-label="Offset"><svg><use href="#xh"/></svg></button><button class="dd" aria-label="More offset"></button><button aria-label="Array"><svg><use href="#four"/></svg></button><button aria-label="Stretch"><svg><use href="#stretch"/></svg></button><button class="dd" aria-label="More stretch"></button>
    </div>
    <div class="grp w64">
      <button aria-label="Dimension"><svg><use href="#bulb"/></svg></button><button class="dd" aria-label="More dimension"></button><button aria-label="Note"><svg><use href="#move"/></svg></button>
    </div>
    <div class="grp w286">
      <button aria-label="Net surface"><svg><use href="#grid"/></svg></button><button aria-label="Ruled surface"><svg><use href="#lines"/></svg></button><button aria-label="Revolved"><svg><use href="#arc"/></svg></button><button aria-label="Swept"><svg><use href="#clip"/></svg></button><button aria-label="Draft"><svg><use href="#box"/></svg></button><button class="dd" aria-label="More draft"></button><i class="sep"></i><button aria-label="Trim surface"><svg><use href="#mesh"/></svg></button><button aria-label="Extend surface"><svg><use href="#mesh2"/></svg></button><button aria-label="Blend"><svg><use href="#wcube"/></svg></button><i class="sep"></i><button aria-label="Machining"><svg><use href="#mesh2"/></svg></button><button class="dd" aria-label="More machining"></button><button aria-label="Hatch"><svg><use href="#stripe"/></svg></button><button class="dd" aria-label="More hatch"></button><button aria-label="Tool"><svg><use href="#stamp"/></svg></button><button class="dd" aria-label="More tool"></button>
    </div>
  </div>

  <div class="toolrow">
    <div class="coords">
      <button class="cell" aria-label="X coordinate"><svg viewBox="0 0 16 16"><path d="M4 2l4 5 4-5M8 7l-4 6h8z" fill="none" stroke="#333" stroke-width="1.300"/></svg></button>
      <input class="coord" aria-label="X value" value="-36.25">
      <div class="coordend">
        <button class="cell" aria-label="Select validate"><svg><use href="#chk"/></svg></button>
        <button class="cell off" aria-label="Cancel selection"><svg><use href="#nog"/></svg></button>
        <button class="cell" aria-label="End selection"><svg><use href="#dot"/></svg></button>
        <button class="cell off" aria-label="Selection help"><svg><use href="#help"/></svg></button>
      </div>
    </div>
  </div>
  <div class="ribbon"></div>

  <main class="work">
    <aside class="dock left">
      <div class="dockbox">
        <button aria-label="Extrude"><svg><use href="#bext"/></svg></button>
        <button aria-label="Revolve"><svg><use href="#brev"/></svg></button>
        <button aria-label="Sweep"><svg><use href="#bswp"/></svg></button>
        <button aria-label="Loft"><svg><use href="#bloft"/></svg></button>
        <button class="more" aria-label="Solid fillet"><svg><use href="#bfil"/></svg></button>
        <i class="hsep"></i>
        <button aria-label="Shell"><svg><use href="#bshell"/></svg></button>
        <button class="more" aria-label="Boolean"><svg><use href="#bbool"/></svg></button>
        <button aria-label="Draft faces"><svg><use href="#bdraft"/></svg></button>
        <button aria-label="Thicken"><svg><use href="#bthick"/></svg></button>
        <button class="bar" aria-label="Block"><svg><use href="#bcube"/></svg></button>
        <i class="hsep"></i>
        <button aria-label="Find features"><svg><use href="#bfeat"/></svg></button>
        <button aria-label="From surfaces"><svg><use href="#b4"/></svg></button>
        <button aria-label="Trim solid"><svg><use href="#bsheet"/></svg></button>
        <button class="bar" aria-label="Layout"><svg><use href="#blay"/></svg></button>
        <i class="hsep"></i>
        <button class="more" aria-label="Primitives"><svg><use href="#bmap"/></svg></button>
        <button class="more" aria-label="Remove"><svg><use href="#bred"/></svg></button>
      </div>
    </aside>
    <section class="manager">
      <div class="mantabs">Operations Manager</div>
      <div class="mansub">Toolpaths</div>
      <div class="manbody"></div>
      <div class="manfoot"><i class="thumb"></i></div>
    </section>
    <section class="view">
      <svg class="drawing" width="968" height="518" viewBox="286 139 968 518" fill="none">
        <path d="M492.500 658V162.500H1050.500V658" stroke="#6a00b8"/>
        <g stroke="#c3c3ad">
          <path d="M740 379L771 347l28 28 28-28 94 93-94 95-28-27-28 27-31-31"/>
          <path d="M740 393l31-31 79 78-79 80-31-31"/>
          <path d="M827 362l79 78-79 80-19-20 58-60-58-58z"/>
          <path d="M649.500 600v33h7v-33M706 600l-14 33h6l14-33M738 600l14 33h6l-14-33"/>
          <path d="M771.500 562.500h6.500v62.500h27v8h-33.500z"/>
          <path d="M816.500 562.500h18l18 2 12 8 8 13 2 13-2 13-8 12-11 7-14 3h-21.500z"/>
          <path d="M823.500 569.500l26 2 9 5 7 10 3 12-2 12-8 10-10 4-25 1z"/>
          <path d="M889 562.500h6.500v71H889"/>
        </g>
        <path d="M889.500 562v71h6" stroke="#8800c8" stroke-width="1"/>
        <path d="M894 594.500h3" stroke="#000046" stroke-width="2"/>
        <path d="M320.500 600v24" stroke="#4fa08a"/><path d="M321 624.500h15" stroke="#a01040"/>
        <path d="M342 621l5 7M347 621l-5 7" stroke="#b01030" stroke-width="2"/>
      </svg>
      <p class="gview">Gview:TOP&nbsp;&nbsp; WCS:TOP&nbsp;&nbsp; T/Cplane:TOP</p>
      <div class="scale"><span class="num">14.340</span><span class="unit">Metric</span></div>
    </section>
    <aside class="dock right">
      <div class="dockbox tall">
        <button aria-label="Screen"><svg><use href="#rscr"/></svg></button>
        <button aria-label="Dynamic transform"><svg><use href="#xf"/></svg></button>
        <button aria-label="Axes"><svg><use href="#rax"/></svg></button>
        <button aria-label="Open file"><svg><use href="#open"/></svg></button>
        <button aria-label="New file"><svg><use href="#page"/></svg></button>
      </div>
      <div class="dockbox masks">
        <button aria-label="Mask all"><svg><use href="#q1"/></svg></button>
        <button aria-label="Mask points"><svg><use href="#q2"/></svg></button>
        <button aria-label="Mask lines"><svg><use href="#q3"/></svg></button>
        <button aria-label="Mask arcs"><svg><use href="#q4"/></svg></button>
        <button aria-label="Mask splines"><svg><use href="#q5"/></svg></button>
        <button aria-label="Mask drafting"><svg><use href="#q6"/></svg></button>
        <button aria-label="Mask surfaces"><svg><use href="#q7"/></svg></button>
        <button aria-label="Mask solids"><svg><use href="#q8"/></svg></button>
        <button aria-label="Mask none"><svg><use href="#nog"/></svg></button>
        <i class="hsep"></i>
        <button aria-label="Mask group"><svg><use href="#q9"/></svg></button>
        <button aria-label="Mask result"><svg><use href="#q9"/></svg></button>
        <i class="hsep"></i>
        <button aria-label="Mask color"><svg><use href="#q10"/></svg></button>
        <button aria-label="Mask level"><svg><use href="#q11"/></svg></button>
        <i class="hsep"></i>
        <button aria-label="Mask last"><svg><use href="#q12"/></svg></button>
      </div>
    </aside>
  </main>

  <footer class="status">
    <button class="s3d">3D</button><button class="sgv">Gview</button><button class="spl">Planes</button>
    <label for="z" class="sz">Z</label>
    <select id="z" class="combo zsel"><option>0.0</option></select>
    <button class="color" aria-label="Color">10</button><button class="tri" aria-label="Pick color">▼</button>
    <label for="lvl" class="slv">Level</label>
    <select id="lvl" class="combo lvl"><option>1 : 0</option></select>
    <button class="sat">Attributes</button>
    <span class="pick p1"><select class="combo" aria-label="Point style"><option></option></select><svg viewBox="0 0 30 20"><path d="M4 10h8M8 6v8M5 13l6-6" stroke="#111" stroke-width="1.300"/></svg></span>
    <span class="pick p2"><select class="combo" aria-label="Line style"><option></option></select><svg viewBox="0 0 52 20"><path d="M2 10h30" stroke="#000" stroke-width="2"/></svg></span>
    <span class="pick p3"><select class="combo" aria-label="Line width"><option></option></select><svg viewBox="0 0 56 20"><path d="M2 10.500h34" stroke="#222"/></svg></span>
    <button class="swc">WCS</button><button class="sgr">Groups</button><button class="sex">!</button><button class="sqm">?</button>
  </footer>

  <footer class="taskbar">
    <button class="weather">
      <svg viewBox="0 0 22 26"><path d="M1 11q0-3 3-3 1-4 5-4l6 7z" fill="#a9c3ee"/><path d="M4 24q9 2 11-10 4 10-4 11-5 1-7-1z" fill="#f2a23c"/><path d="M8 22q1-4 4-3 3-3 5 0 3 0 3 3z" fill="#c7d8f5"/><circle cx="15" cy="7" r="6" fill="#f28b96"/><text x="15" y="10" class="badge">1</text></svg>
      <span class="temp">83°F</span><span class="sky">Partly cloudy</span>
    </button>
    <div class="apps">
      <button class="app-btn" aria-label="Start"><svg viewBox="0 0 24 24"><path d="M1 1h10.500v10.500H1zM12.500 1H23v10.500H12.500zM1 12.500h10.500V23H1zM12.500 12.500H23V23H12.500z" fill="#4cc4f5"/></svg></button>
      <label class="search"><svg viewBox="0 0 16 16"><circle cx="7" cy="7" r="5" fill="none" stroke="#e8e8e8" stroke-width="1.500"/><path d="M10.500 10.500L15 15" stroke="#e8e8e8" stroke-width="1.500"/></svg><input type="text" placeholder="Search" aria-label="Search"><svg class="lav" viewBox="0 0 34 24"><path d="M2 20V10M5 20V8M9 20L7 4M9 20l3-14M13 20l5-11M16 18l6-7" stroke="#8f6fc8" stroke-width="1.500"/><circle cx="27" cy="14" r="5" fill="#f5c22c"/><path d="M2 23q6-5 14-4 10-5 17 4z" fill="#b884c8"/><path d="M11 23q6-6 12-4" stroke="#e8b0d0" fill="none"/></svg></label>
      <button class="app-btn" aria-label="Task view"><svg viewBox="0 0 24 24"><path d="M2 8h13v13H2z" fill="#777b74"/><path d="M7 3h15v15H7z" fill="#e9e9e9"/><path d="M7 8h8v10H7z" fill="#b8bab5"/></svg></button>
      <button class="app-btn" aria-label="Copilot"><svg viewBox="0 0 24 24"><path d="M7 2h8q2 0 3 3l-5 1q-2 0-3 4l-2 7H4q-4 0-3-4l3-8q1-3 3-3z" fill="url(#gCopA)"/><path d="M17 22H9q-2 0-3-3l5-1q2 0 3-4l2-7h4q4 0 3 4l-3 8q-1 3-3 3z" fill="url(#gCopB)"/></svg></button>
      <button class="app-btn" aria-label="Edge"><svg viewBox="0 0 24 24"><path d="M2 13Q2 3 12 2q9 0 10 8 0 5-6 5-4 0-3-3 1-3-3-3-6 1-4 7 2 5 8 5-12 4-12-8z" fill="url(#gEdge)"/><path d="M6 15q0-5 4-6 3 0 3 3 0 5 8 4-3 6-9 6-6-1-6-7z" fill="#1464be"/></svg></button>
      <button class="app-btn run" aria-label="File Explorer"><svg viewBox="0 0 24 24"><path d="M2 4h7l2 2h11v15H2z" fill="#e8a820"/><path d="M2 8h20v13H2z" fill="#ffd35c"/><path d="M6 15h12v6H6z" fill="#1d7cc8"/></svg></button>
      <button class="app-btn run" aria-label="WhatsApp"><svg viewBox="0 0 24 24"><rect x="1" y="2" width="21" height="21" rx="3" fill="#27d063"/><path d="M5 19l1-4a6.500 6.500 0 1 1 3 3z" fill="none" stroke="#fff" stroke-width="1.500"/><path d="M9 9q0 6 6 6l1-2-2-1-1 1q-2-1-2-2l1-1-1-2z" fill="#fff"/><circle cx="19" cy="4" r="7" fill="#5bbcec"/><text x="19" y="8" class="badge four">4</text></svg></button>
      <button class="app-btn run" aria-label="Steam"><svg viewBox="0 0 24 24"><circle cx="12" cy="12" r="10" fill="#17406b"/><circle cx="15" cy="9" r="4" fill="none" stroke="#fff" stroke-width="2"/><path d="M3 13l6 3 4-5" fill="none" stroke="#fff" stroke-width="3"/><circle cx="9" cy="16" r="2.500" fill="#fff"/></svg></button>
      <button class="app-btn run" aria-label="SolidWorks"><svg viewBox="0 0 24 24"><path d="M2 4l16-2 4 3v14l-4 3H5l-3-3z" fill="#b01620"/><text x="11" y="14" class="sw">SW</text><text x="14" y="21" class="sw yr">2021</text></svg></button>
      <button class="app-btn run" aria-label="Discord"><svg viewBox="0 0 24 24"><circle cx="11" cy="13" r="10" fill="#5865e8"/><path d="M6 9q5-3 10 0l2 7-3 2-1-2H8l-1 2-3-2z" fill="#fff"/><circle cx="9" cy="13" r="1.300" fill="#5865e8"/><circle cx="13" cy="13" r="1.300" fill="#5865e8"/><circle cx="18" cy="5" r="6" fill="#ee8482"/><circle cx="18" cy="5" r="2.500" fill="#fff"/></svg></button>
      <button class="app-btn run active" aria-label="Mastercam"><svg viewBox="0 0 24 24"><path d="M3 3h5l3 6 5-7h3l-6 9 4 10h-5l-2-6-5 7H2l7-9z" fill="#d0d0d0"/><path d="M22 3h-5v4h4v4h-5" fill="none" stroke="#8c2a35" stroke-width="2"/></svg></button>
      <button class="app-btn run" aria-label="OBS"><svg viewBox="0 0 24 24"><circle cx="11" cy="13" r="9.500" fill="#1a1a1a" stroke="#d8d8d8" stroke-width="1.500"/><path d="M9 5q-3 6 3 8M18 17q-2-6-7-4M5 17q6 2 7-4" fill="none" stroke="#d8d8d8" stroke-width="2"/><circle cx="19" cy="5" r="5.500" fill="#f40d0d"/></svg></button>
      <button class="app-btn run" aria-label="Notepad"><svg viewBox="0 0 24 24"><path d="M4 3h16v19H4z" fill="#58c8e8"/><path d="M4 2h16v3H4z" fill="#c9eef8"/><path d="M7 9h10M7 13h10M7 17h10" stroke="#14587c" stroke-width="1.500"/></svg></button>
      <button class="app-btn run" aria-label="Browser"><svg viewBox="0 0 24 24"><circle cx="12" cy="12" r="10" fill="#2a67a8"/><path d="M19 4q-9-3-11 2 0 4 5 6t1 6q-4 3-10-1" fill="none" stroke="#e8f2fa" stroke-width="2"/><path d="M20 6q-7-2-9 1 1 3 5 5 3 4-2 9" fill="none" stroke="#9fd0f0" stroke-width="1.500"/></svg></button>
    </div>
    <div class="tray">
      <button class="t1" aria-label="Show hidden icons"><svg viewBox="0 0 16 16"><path d="M4 10l4-4 4 4" fill="none" stroke="#fff" stroke-width="1.500"/></svg></button>
      <button class="t2" aria-label="OneDrive"><svg viewBox="0 0 16 16"><path d="M2 11q-2-5 3-6 4-4 7 1 3 1 2 5z" fill="#c9c9c9"/><circle cx="11" cy="11" r="4" fill="#b41c34"/><path d="M9.500 9.500l3 3M12.500 9.500l-3 3" stroke="#fff"/></svg></button>
      <button class="t3" aria-label="Microphone"><svg viewBox="0 0 16 16"><rect x="6" y="1" width="4" height="8" rx="2" fill="#5c8c94" stroke="#a9d3d8"/><path d="M3.500 7q0 5 4.500 5t4.500-5M8 12v3" fill="none" stroke="#a9d3d8"/></svg></button>
      <button class="t4" aria-label="Network"><svg viewBox="0 0 16 16"><path d="M1 7q7-6 14 0M3.500 9.500q4.500-4 9 0M6 12q2-2 4 0" fill="none" stroke="#f0f0f0" stroke-width="1.400"/><circle cx="8" cy="13" r="1.300" fill="#fff"/></svg></button>
      <button class="t5" aria-label="Volume"><svg viewBox="0 0 16 16"><path d="M1 6h2l4-3v10l-4-3H1zM9 6q2 2 0 4M11 4q4 4 0 8M13 2q5 6 0 12" fill="none" stroke="#f0f0f0" stroke-width="1.200"/></svg></button>
      <button class="t6" aria-label="Battery"><svg viewBox="0 0 18 16"><rect x="1" y="4" width="14" height="9" rx="2" fill="none" stroke="#e8e8e8" stroke-width="1.300"/><path d="M3 6h10v5H3z" fill="#68b868"/><path d="M16 7h1v3h-1zM8 1v7M6 6l2 3 2-3" stroke="#e8e8e8" fill="none"/></svg></button>
      <button class="clock"><span>8:24 PM</span><span>7/5/2026</span></button>
      <button class="bell" aria-label="Notifications"><svg viewBox="0 0 16 16"><path d="M2 12l1-2V6q1-4 5-4t5 4v4l1 2zM6 14h4" fill="#f2f2f2" stroke="#f2f2f2"/><path d="M7 5h3l-3 4h3M11 1h3l-3 3h3" fill="none" stroke="#222"/></svg></button>
    </div>
  </footer>

  <section class="dialog" role="dialog" aria-labelledby="dt">
    <header class="dtitle">
      <svg viewBox="0 0 14 10"><path d="M.500.500h13v9H.500z" fill="#fff" stroke="#999"/><path d="M2 2h6v6H2z" fill="#2f6f6a"/><path d="M9 2h3v6H9z" fill="#cdd"/></svg>
      <h2 id="dt">2D Toolpaths - Pocket</h2>
      <button aria-label="Close dialog"><svg viewBox="0 0 10 10"><path d="M1 1l8 8M9 1L1 9" stroke="#222"/></svg></button>
    </header>
    <div class="dtools">
      <button aria-label="Tool"><svg viewBox="0 0 20 20"><path d="M5 1h10v3l-1 1v6l-2 3H8l-2-3V5L5 4z" fill="#26262e"/><path d="M6 3h8M8 6v5" stroke="#888"/><path d="M8 14h4v5l-2 1-2-1z" fill="#d69a1e"/></svg></button>
      <i class="sep"></i>
      <button aria-label="Save parameters"><svg viewBox="0 0 16 16"><use href="#save"/></svg></button>
      <button aria-label="Save to defaults"><svg viewBox="0 0 16 16"><use href="#savew"/></svg></button>
    </div>
    <div class="dbody">
      <div class="dleft">
        <div class="treebox">
          <div class="treeview">
            <svg class="treelines" viewBox="0 0 130 214" width="130" height="214" fill="none">
              <g stroke="#a5a5a5" stroke-dasharray="1 1">
                <path d="M10.500 7v207M11 7.500h22M11 20.500h9M11 33.500h22M11 47.500h22M14 60.500h19M14 153.500h19M11 180.500h22M11 193.500h22M11 207.500h22"/>
                <path d="M26.500 67v73M30 73.500h19M30 100.500h19M27 127.500h8M27 140.500h8M26.500 160v7M27 167.500h22M42.500 80v7M43 87.500h22M42.500 107v7M43 113.500h22"/>
              </g>
              <g stroke="#8a8a8a" fill="#fff"><path d="M7.500 57.500h6v6h-6zM23.500 70.500h6v6h-6zM23.500 97.500h6v6h-6zM7.500 150.500h6v6h-6z"/></g>
              <path d="M9 60.500h4M25 73.500h4M25 100.500h4M9 153.500h4" stroke="#333"/>
              <use href="#tick" x="20" y="14" width="12" height="12"/>
              <use href="#no" x="36" y="121" width="12" height="12"/>
              <use href="#no" x="36" y="134" width="12" height="12"/>
            </svg>
            <ul class="tree">
              <li>Toolpath Type</li><li>Tool</li><li><span class="sel">Holder</span></li><li></li>
              <li>Cut Parameters</li><li class="l1">Roughing</li><li class="l2">Entry Motion</li><li class="l1">Finishing</li><li class="l2">Lead In/Out</li><li class="l1">Depth Cuts</li><li class="l1">Break Through</li>
              <li>Linking Parameters</li><li class="l1">Home / Ref. Points</li><li></li><li>Arc Filter / Tolerance</li><li>Planes (WCS)</li>
            </ul>
          </div>
          <i class="vthumb"></i><i class="hthumb"></i>
        </div>
        <h3 class="qh">Quick View Settings</h3>
        <div class="treebox quick">
          <table>
            <tr><th>Tool</th><td></td></tr>
            <tr><th>Tool Diameter</th><td>1</td></tr>
            <tr><th>Corner Radius</th><td>0</td></tr>
            <tr><th>Feed Rate</th><td>0.001</td></tr>
            <tr><th>Spindle Speed</th><td>50000</td></tr>
            <tr><th>Coolant</th><td>Off</td></tr>
            <tr><th>Tool Length</th><td>20</td></tr>
            <tr><th>Length Offset</th><td>1</td></tr>
            <tr><th>Diameter Off...</th><td>1</td></tr>
          </table>
          <i class="vthumb"></i><i class="hthumb"></i>
        </div>
        <p class="legend"><svg><use href="#tick"/></svg>= edited</p>
        <p class="legend"><svg><use href="#no"/></svg>= disabled</p>
      </div>
      <div class="dright">
        <div class="pane">
          <div class="lib">
            <div class="listbox"></div>
            <div class="libbtns"><button>Open library</button><button>New library</button><button>Save library</button><button>New holder</button></div>
            <p class="libtext">Library:<br>Default.holders</p>
            <p class="note">* = Indicates holder is not saved in current library</p>
          </div>
          <div class="seg">
            <fieldset>
              <legend>Segment properties</legend>
              <label for="h">Height</label><input id="h" value="40.0">
              <label for="ud">Upper diameter</label><input id="ud" value="30.0">
              <label for="ld">Lower diameter</label><input id="ld" value="25.0">
            </fieldset>
            <button class="newseg" disabled>New segment</button>
          </div>
          <svg class="holder" viewBox="530 195 190 290" fill="none">
            <circle cx="635.500" cy="317" r="73.500" stroke="#e80000" stroke-width="13"/>
            <path d="M586 367L684 268" stroke="#e80000" stroke-width="13"/>
            <path d="M560.500 202H710.500V213L695.500 221.500 710.500 230V239.500H688V277H681L672.500 284V364L664 371V387L672.500 390V425L662.500 431H608.500L598.500 425V390L606.500 387V371L598.500 364V284L591 277H583V239.500H560.500V230L575.500 221.500 560.500 213Z" stroke="#000" stroke-width="1.500"/>
            <path d="M608 431.500H553.500V450M553.500 471v6.500H630" stroke="#b84a5c" stroke-width="1.200"/>
            <path d="M635.500 454v23" stroke="#ffe28a" stroke-width="3"/><path d="M634.500 431v47" stroke="#333"/>
            <text x="534" y="465" class="dim">20.00</text>
          </svg>
        </div>
        <div class="actions">
          <button aria-label="OK"><svg viewBox="0 0 16 16"><path d="M1 9l3-2 3 3q3-6 7-9l1 1Q10 8 8 15H6z" fill="#54c832" stroke="#2f8c1e"/></svg></button>
          <button aria-label="Cancel"><svg viewBox="0 0 16 16"><path d="M2 3l2-2 4 3 4-3 3 2-3 5 3 4-3 3-4-3-4 3-3-3 3-4z" fill="#e33618" stroke="#9c2010"/></svg></button>
          <button aria-label="Apply"><svg class="big" viewBox="0 0 20 20"><circle cx="10" cy="10" r="9.500" fill="#1d69b0"/><path d="M8 3h4v5h5v4h-5v5H8v-5H3V8h5z" fill="#fff"/></svg></button>
          <button aria-label="Help"><svg viewBox="0 0 16 16"><path d="M4 6q0-4 4-4t4 3q0 2-3 3.500V11" fill="none" stroke="#444" stroke-width="3.500"/><path d="M4 6q0-4 4-4t4 3q0 2-3 3.500V11" fill="none" stroke="#bbb" stroke-width="1.500"/><circle cx="9" cy="14" r="1.500" fill="#999" stroke="#444"/></svg></button>
        </div>
      </div>
    </div>
    <svg class="grip" viewBox="0 0 8 8"><path d="M6 0h2v2H6zM3 3h2v2H3zM6 3h2v2H6zM0 6h2v2H0zM3 6h2v2H3zM6 6h2v2H6z" fill="#bbb"/></svg>
    <svg class="cursor" viewBox="0 0 12 16"><path d="M1 1v12l3-3 2 5 2-1-2-5h5z" fill="#fff" stroke="#666"/></svg>
  </section>
</div>
</body>
</html>
```
FILE: styles.css
```css
* { box-sizing: border-box; }
body { margin: 0; font-family: "Open Sans", "Noto Sans", sans-serif; font-size: 10px; color: #222; background: #fff; }
h1, h2, h3, p, ul { margin: 0; padding: 0; font-weight: 400; }
button, input, select { font: inherit; color: inherit; margin: 0; padding: 0; border: 0; background: none; border-radius: 0; min-width: 0; }
button { display: flex; align-items: center; justify-content: center; }
svg { display: block; flex: none; }
.sprite { position: absolute; width: 0; height: 0; }

.app { position: relative; min-height: 100vh; display: flex; flex-direction: column; overflow: hidden; }

.titlebar { height: 19px; display: flex; align-items: center; padding-left: 2px; background: #f3f3f3; color: #707070; }
.logo { width: 13px; height: 13px; margin-right: 4px; }
.title { font-size: 10px; line-height: 18px; flex: 1; white-space: nowrap; }
.winbtns { display: flex; }
.winbtns button { width: 39px; height: 18px; }
.winbtns svg { width: 9px; height: 9px; }

.menubar { height: 18px; display: flex; gap: 10px; padding: 0 0 2px 6px; color: #666; line-height: 16px; }
.menubar button { white-space: nowrap; }

.toolrow { display: flex; height: 25px; flex: none; }
.grp { display: flex; align-items: center; justify-content: space-between; flex: none; padding: 0 2px 2px 9px; background: #f1f1f1; border-top: 1px solid #bbb; border-right: 1px solid #aaa; position: relative; }
.grp::before { content: ""; position: absolute; left: 3px; top: 5px; bottom: 5px; border-left: 1px dotted #999; }
.grp button { width: 19px; height: 21px; }
.grp svg { width: 14px; height: 14px; }
.grp .dd { width: 12px; }
.dd::before { content: ""; border: 3px solid transparent; border-top: 4px solid #222; border-bottom: 0; }
.dd.grey::before { border-top-color: #999; }
.sep { width: 1px; height: 14px; margin: 0 2px; background: #aaa; }
.w127 { width: 127px; } .w51 { width: 51px; } .w224 { width: 224px; } .w89 { width: 89px; } .w45 { width: 45px; } .w114 { width: 114px; } .w101 { width: 101px; } .w147 { width: 147px; }
.w234 { width: 234px; } .w63 { width: 63px; } .w236 { width: 236px; } .w64 { width: 64px; } .w286 { width: 286px; }

.coords { width: 852px; display: flex; align-items: center; gap: 5px; padding: 0 7px 1px 4px; background: #ffffc8; border-top: 1px solid #bbb; border-right: 1px solid #aaa; }
.cell { width: 18px; height: 18px; background: #f1f1f1; }
.cell svg { width: 12px; height: 12px; }
.coord { width: 80px; height: 16px; background: #f6f6f6; border: 1px solid #ccc; font: 10px Lato, "Liberation Sans", sans-serif; }
.coordend { margin-left: auto; display: flex; gap: 2px; }
.coordend .off { margin-left: 5px; }
.coordend .cell svg { width: 16px; height: 16px; }
.ribbon { height: 27px; background: #efefef; border-top: 1px solid #b4b4b4; border-bottom: 1px solid #b4b4b4; }

.work { flex: 1 1 518px; display: flex; min-height: 518px; background: #efefef; }
.dock { flex: none; }
.left { width: 36px; background: #fff; border-right: 1px solid #d0d0d0; }
.right { width: 26px; background: #fff; padding-left: 1px; }
.dockbox { position: relative; display: flex; flex-direction: column; justify-content: space-between; min-height: 327px; padding: 9px 2px 2px; background: #f0f0f0; border-bottom: 1px solid #aaa; }
.dockbox::before { content: ""; position: absolute; left: 4px; right: 4px; top: 3px; border-top: 1px dotted #999; }
.dockbox.tall { min-height: 195px; justify-content: flex-start; }
.dockbox.masks { min-height: 290px; }
.dockbox button { width: 20px; height: 18px; position: relative; }
.dockbox svg { width: 14px; height: 14px; }
.hsep { display: block; height: 1px; margin: 3px 2px; background: #b5b5b5; }
.more::after { content: ""; position: absolute; left: 23px; top: 7px; border: 3px solid transparent; border-top: 4px solid #222; border-bottom: 0; }
.bar::after { content: ""; position: absolute; left: 21px; top: 2px; height: 14px; border-left: 1px solid #aaa; }

.manager { flex: none; width: 241px; margin: 1px 5px 5px 4px; display: flex; flex-direction: column; border: 1px solid #999; background: #f0f0f0; font: 10px Lato, "Liberation Sans", sans-serif; }
.mantabs { height: 13px; background: #b5b5b5; line-height: 13px; }
.mansub { height: 20px; line-height: 20px; padding-left: 2px; }
.manbody { flex: 1; background: #f6f6f6; border-top: 1px solid #bbb; }
.manfoot { height: 15px; padding: 7px 44px 0 15px; background: #efefef; }
.thumb { display: block; height: 2px; background: #8a8a8a; }

.view { position: relative; flex: 1; min-width: 0; background: #00008e; overflow: hidden; }
.drawing { position: absolute; left: 0; top: 0; }
.gview { position: absolute; left: 6px; bottom: 5px; color: #c8c8e4; font-weight: 600; line-height: 14px; }
.scale { position: absolute; right: 19px; bottom: 8px; width: 81px; display: grid; grid-template-rows: 11px 11px; text-align: center; font-weight: 600; line-height: 10px; color: #c8c8e8; border: solid #c8c8d0; border-width: 0 1px; }
.scale .num { color: #22f052; border-bottom: 1px solid #c8c8d0; padding-right: 10px; }
.scale .unit { padding-right: 12px; line-height: 13px; }

.status { height: 24px; flex: none; display: flex; align-items: center; justify-content: flex-end; padding-top: 3px; background: #efefef; overflow: hidden; white-space: nowrap; }
.status button, .status label { height: 20px; line-height: 20px; text-align: center; }
.combo { appearance: none; height: 18px; border: 1px solid #999; padding-left: 4px; background-color: #fff; background-repeat: no-repeat; background-image: linear-gradient(45deg, transparent 45%, #777 45% 60%, transparent 60%), linear-gradient(-45deg, transparent 45%, #777 45% 60%, transparent 60%); background-size: 4px 4px; background-position: right 7px center, right 4px center; }
.zsel { width: 69px; background-image: linear-gradient(45deg, transparent 45%, #777 45% 60%, transparent 60%), linear-gradient(-45deg, transparent 45%, #777 45% 60%, transparent 60%), linear-gradient(#ffff8c, #ffff8c); background-size: 4px 4px, 4px 4px, 52px 100%; background-position: right 7px center, right 4px center, left top; }
.s3d { width: 26px; } .sgv { width: 40px; } .spl { width: 38px; } .sz { width: 12px; }
.color { width: 24px; margin-left: 6px; background: #00f41c; color: #0a5c10; }
.status .color { height: 15px; line-height: 15px; }
.tri { width: 18px; font-size: 12px; color: #000; }
.slv { width: 29px; } .lvl { width: 82px; } .sat { width: 58px; margin-right: 2px; }
.pick { position: relative; display: block; height: 18px; margin-right: 4px; }
.pick .combo { width: 100%; display: block; }
.pick svg { position: absolute; left: 0; top: 0; height: 18px; pointer-events: none; }
.p1 { width: 29px; } .p2 { width: 51px; } .p3 { width: 56px; }
.swc { width: 36px; } .sgr { width: 50px; } .sex { width: 12px; } .sqm { width: 8px; margin-left: 5px; }

.taskbar { height: 39px; flex: none; display: grid; grid-template-columns: 1fr auto 1fr; align-items: center; background: linear-gradient(90deg, #20281a 0 25%, #25271b 60%, #2a2924 80%, #282622); color: #eee; }
.weather { display: grid; grid-template-columns: 20px auto; grid-template-rows: 13px 13px; column-gap: 6px; justify-content: start; padding-left: 17px; line-height: 13px; text-align: left; color: #eee; }
.weather svg { grid-row: 1 / 3; width: 20px; height: 24px; }
.sky { color: #c4c4bd; }
.badge { font: 9px "Open Sans", sans-serif; text-anchor: middle; fill: #20204a; }
.badge.four { font-size: 11px; }
.apps { display: flex; align-items: center; gap: 11px; }
.app-btn { position: relative; width: 26px; height: 32px; border-radius: 4px; }
.app-btn svg { width: 20px; height: 20px; overflow: visible; }
.app-btn.run::after { content: ""; position: absolute; left: 11px; bottom: -1px; width: 5px; height: 2px; border-radius: 1px; background: #9a9a94; }
.app-btn.active { background: #3a3a33; }
.app-btn.active.run::after { left: 8px; width: 11px; background: #62c4f0; }
.search { width: 182px; height: 27px; display: flex; align-items: center; gap: 8px; padding: 0 5px 0 9px; border-radius: 14px; background: #3b4238; border: 1px solid #474e43; margin: 0 -3px 0 -2px; }
.search svg { width: 13px; height: 13px; }
.search input { flex: 1; width: 0; font-size: 11px; outline: 0; }
.search input::placeholder { color: #d0d0cc; opacity: 1; }
.search .lav { width: 33px; height: 23px; }
.sw { font: bold 9px "Liberation Sans", sans-serif; text-anchor: middle; fill: #fff; }
.yr { font-size: 6px; }
.tray { display: flex; align-items: center; justify-content: flex-end; padding-right: 15px; }
.tray svg { width: 16px; height: 16px; }
.t1 { margin-right: 12px; } .t2 { margin-right: 8px; } .t3 { margin-right: 12px; } .t4 { margin-right: 4px; } .t5 { margin-right: 6px; }
.clock { flex-direction: column; align-items: flex-end; width: 55px; line-height: 13px; color: #f2f2f2; }
.bell { margin-left: 5px; }

.dialog { position: absolute; left: 47px; top: 81px; width: 707px; height: 528px; display: flex; flex-direction: column; background: #efefef; border-radius: 7px; box-shadow: 0 0 0 1px #b0a8a8, 0 14px 24px rgba(0, 0, 0, .35), 0 0 6px rgba(0, 0, 0, .3); font: 10px Lato, "Liberation Sans", sans-serif; color: #111; }
.dtitle { height: 24px; flex: none; display: flex; align-items: center; gap: 6px; padding: 0 4px 0 6px; background: #f8efed; border-radius: 7px 7px 0 0; border-bottom: 1px solid #d0caca; font: 10px "Open Sans", sans-serif; }
.dtitle > svg { width: 12px; height: 9px; }
.dtitle h2 { flex: 1; font-size: 10px; }
.dtitle button { width: 20px; height: 20px; }
.dtitle button svg { width: 9px; height: 9px; }
.dtools { height: 34px; flex: none; display: flex; align-items: center; gap: 5px; padding-left: 9px; border-bottom: 1px solid #dcdcdc; }
.dtools button { width: 20px; height: 22px; }
.dtools button:last-child { margin-left: 2px; }
.dtools svg { width: 19px; height: 19px; }
.dtools .sep { height: 22px; margin: 0; }
.dbody { flex: 1; display: grid; grid-template-columns: 144px 1fr; gap: 9px; padding: 12px 6px 7px 5px; }
.treebox { position: relative; height: 229px; padding: 0 0 0 1px; border: 1px solid #a0a0a0; background: #f0f0f0; }
.treeview { position: relative; width: 132px; height: 213px; background: #fff; overflow: hidden; }
.treelines { position: absolute; left: -1px; top: 0; }
.tree { position: relative; height: 100%; display: grid; grid-template-rows: repeat(16, 1fr); list-style: none; line-height: 13px; white-space: nowrap; }
.tree li { padding-left: 35px; }
.tree .l1 { padding-left: 51px; }
.tree .l2 { padding-left: 67px; }
.sel { display: inline-block; background: #0a6fc8; color: #fff; margin-left: -1px; padding: 0 1px; }
.vthumb { position: absolute; right: 7px; top: 14px; width: 2px; height: 126px; background: #8a8a8a; }
.hthumb { position: absolute; left: 15px; bottom: 7px; width: 97px; height: 2px; background: #8a8a8a; }
.qh { font-size: 10px; line-height: 14px; margin: 9px 0 4px; }
.quick { height: 143px; padding-top: 1px; }
.quick table { width: 128px; height: 127px; border-collapse: collapse; background: #fff; table-layout: fixed; white-space: nowrap; }
.quick th { width: 69px; padding: 0 0 0 4px; text-align: left; font-weight: 400; line-height: 14px; }
.quick td { padding: 0; line-height: 14px; }
.quick .vthumb { top: 15px; height: 70px; }
.quick .hthumb { width: 89px; }
.legend { display: flex; align-items: center; gap: 7px; height: 19px; }
.qh + .quick + .legend { margin-top: 3px; }
.legend svg { width: 12px; height: 12px; }
.dright { display: flex; flex-direction: column; justify-content: space-between; min-width: 0; }
.pane { height: 397px; display: grid; grid-template-columns: 132px 1fr 190px; column-gap: 12px; padding: 33px 27px 0 8px; border: solid; border-width: 2px 1px 1px 2px; border-color: #8a8a8a #fff #fff #8a8a8a; }
.listbox { height: 244px; border: 1px solid #999; background: #fff; }
.libbtns { display: grid; grid-template-columns: 60px 60px; gap: 8px 7px; margin: 7px 0 0 1px; }
.libbtns button, .actions button { height: 21px; background: #fdfdfd; border: 1px solid #d6d6d6; border-radius: 3px; white-space: nowrap; }
.libtext { margin-top: 7px; line-height: 13px; }
.note { margin-top: 9px; line-height: 13px; white-space: nowrap; width: 0; }
.seg { padding-top: 94px; }
.seg fieldset { height: 88px; margin: 0; border: 1px solid #dedede; padding: 0 8px 0 0; display: grid; grid-template-columns: 82px 1fr; grid-auto-rows: 24px; column-gap: 13px; width: 157px; }
.seg legend { padding: 0 2px; margin-left: 5px; line-height: 13px; }
.seg label { text-align: right; color: #a0a0a0; line-height: 21px; }
.seg input { width: 50px; height: 17px; }
.newseg { width: 60px; height: 19px; margin: 9px 0 0 49px; background: #f9f9f9; color: #8c8c8c; white-space: nowrap; }
.holder { width: 190px; height: 290px; margin-top: 9px; }
.dim { font: bold 12px "Liberation Sans", Arial, sans-serif; fill: #000; }
.actions { display: flex; gap: 8px; justify-content: flex-end; padding-right: 2px; }
.actions button { width: 42px; height: 22px; }
.actions svg { width: 16px; height: 16px; }
.actions .big { width: 20px; height: 20px; }
.grip { position: absolute; right: 2px; bottom: 2px; width: 7px; height: 7px; }
.cursor { position: absolute; left: 83px; top: 133px; width: 11px; height: 15px; }
```
